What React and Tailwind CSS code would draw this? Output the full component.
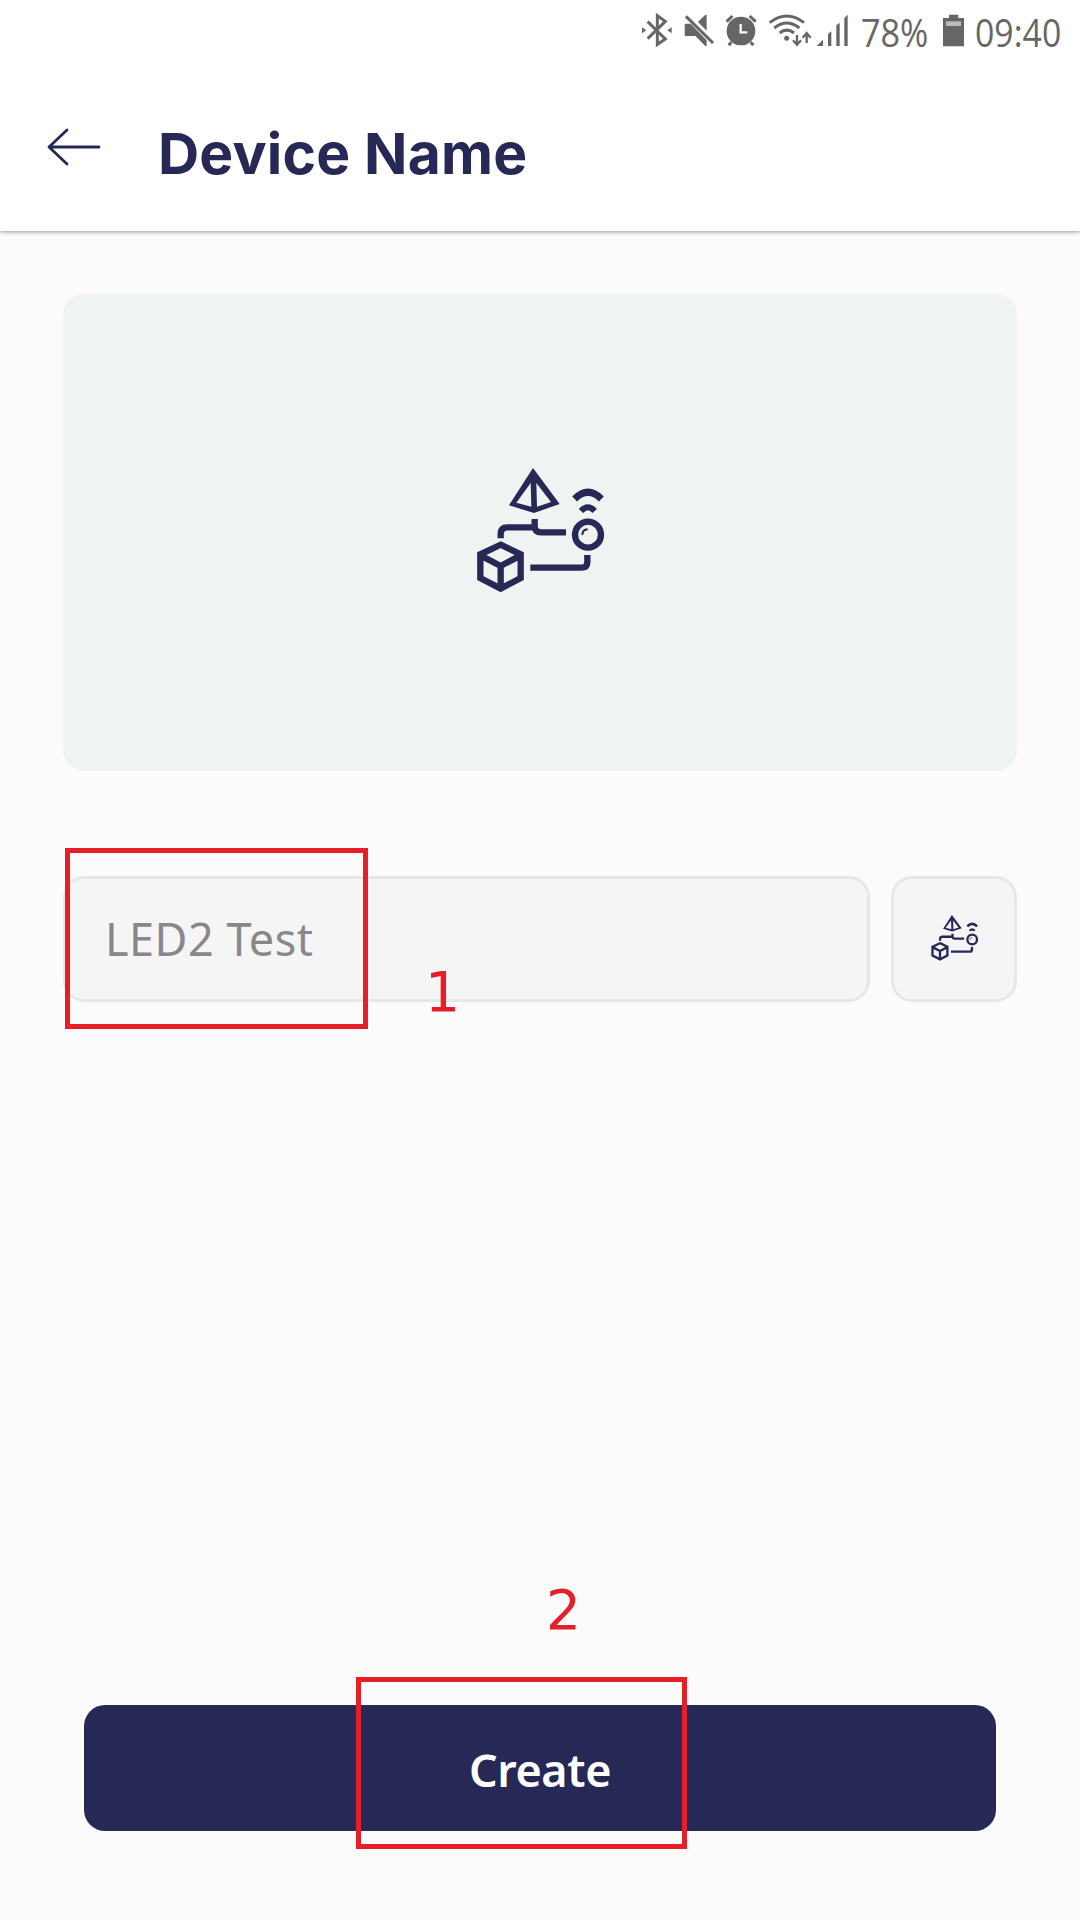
const NAVY = "#262856";

function DeviceIcon({ className }) {
  return (
    <svg viewBox="0 6 480 480" className={className} fill="none" stroke={NAVY} strokeWidth="19">
      <path fillRule="evenodd" fill={NAVY} stroke="none" d="M219 54 L299 162 L222 189 L147 166 Z M212 99 L169 158 L214 170 Z M229 99 L231 170 L273 156 Z" />
      <path d="M224 207 V228 Q224 247 243 247 H318" />
      <path d="M122 265 V252 Q122 232 142 232 H219" />
      <path d="M211 353 H364 Q382 353 382 335 V315" />
      <path d="M122 284 L182 313 V384 L122 416 L61 384 V313 Z M61 316 L122 348 L182 316 M122 348 V416" />
      <circle cx="384" cy="254" r="39" />
      <path strokeWidth="6" d="M367 255 Q367 239 383 238" />
      <path d="M344 147 Q384 107 424 147" strokeWidth="21" />
      <path d="M363 183 Q384 161 404 183" strokeWidth="18" />
    </svg>
  );
}

function BluetoothIcon() {
  return (
    <svg viewBox="30 0 120 180" className="h-[60px] w-[40px]" fill="none" stroke="#666" strokeWidth="9">
      <path d="M53 65 L106 117 L82 133 V47 L106 64 L53 116" />
      <path d="M36 82 L49 91 L36 100 Z M125 82 L112 91 L125 100 Z" fill="#666" stroke="none" />
    </svg>
  );
}

function MuteIcon() {
  return (
    <svg viewBox="150 0 120 180" className="h-[60px] w-[40px]" fill="#666">
      <path d="M164 75 Q164 71 168 71 H182 L230 121 V138 H226 L196 108 H168 Q164 108 164 104 Z M204 66 L226 44 H230 V92 Z" />
      <path d="M168 49 L249 129" stroke="#666" strokeWidth="9" />
    </svg>
  );
}

function AlarmIcon() {
  return (
    <svg viewBox="270 0 135 180" className="h-[60px] w-[45px]" fill="none">
      <circle cx="333" cy="93" r="43" fill="#666" />
      <path d="M290 65 L307 48 M359 48 L377 65" stroke="#666" strokeWidth="9" />
      <path d="M304 127 L296 136 M362 127 L370 136" stroke="#666" strokeWidth="9" />
      <path d="M332 72 V97 H352" stroke="#fff" strokeWidth="7" />
    </svg>
  );
}

function WifiIcon() {
  return (
    <svg viewBox="405 0 150 180" className="h-[60px] w-[50px]" fill="none" stroke="#666" strokeWidth="9">
      <path d="M419 68 Q470 28 522 68 M433 84 Q470 54 508 84 M449 99 Q470 82 492 99" />
      <circle cx="470" cy="115" r="7.500" fill="#666" stroke="none" />
      <path d="M501 105 V134 M489 121 L501 134 L513 121 M530 129 V99 M518 113 L530 99 L542 113" strokeWidth="7" />
    </svg>
  );
}

function SignalIcon() {
  return (
    <svg viewBox="555 0 105 180" className="h-[60px] w-[35px]" fill="#666">
      <path d="M560 138 L579 119 V138 Z M594 138 V102 L604 94 V138 Z M619 138 V76 L629 68 V138 Z M643 138 V54 L653 44 V138 Z" />
    </svg>
  );
}

function BatteryIcon() {
  return (
    <svg viewBox="270 0 90 180" className="h-[60px] w-[30px]">
      <path fill="#666" d="M297 44 H325 V54 H342 V139 H279 V54 H297 Z" />
      <path fill="#bbb" d="M288 64 H333 V78 H288 Z" />
    </svg>
  );
}

export default function App() {
  return (
    <div className="relative flex h-[1920px] w-[1080px] flex-col overflow-hidden bg-[#fbfbfb] font-['Noto_Sans',sans-serif]">
      <header className="h-[231px] shrink-0 bg-white shadow-[0_1px_4px_rgba(0,0,0,0.4)]">
        <div className="flex h-[60px] pl-[640px] font-['Open_Sans',sans-serif] text-[38px] font-medium leading-[64px] text-[#666]">
          <BluetoothIcon />
          <MuteIcon />
          <AlarmIcon />
          <WifiIcon />
          <SignalIcon />
          <span className="w-[90px] shrink-0 pl-[11px]">
            <span className="inline-block origin-left scale-x-[0.9]">78%</span>
          </span>
          <BatteryIcon />
          <span className="pl-[5px]">
            <span className="inline-block origin-left scale-x-[0.89]">09:40</span>
          </span>
        </div>
        <div className="flex pl-[47px]">
          <svg viewBox="0 0 54 38" className="mt-[68px] h-[38px] w-[54px]" fill="none" stroke={NAVY} strokeWidth="2.800" strokeLinecap="round" strokeLinejoin="round">
            <path d="M52 19 H2 M20 2 L2 19 L20 36" />
          </svg>
          <h1 className="ml-[57px] mt-[55px] whitespace-nowrap font-['Inter',sans-serif] text-[57px] font-bold leading-[78px] tracking-[0.2px] text-[#262856]">Device Name</h1>
        </div>
      </header>

      <main className="flex grow flex-col px-[63px] pt-[63px]">
        <div className="flex h-[477px] items-center justify-center rounded-[21px] bg-[#eff3f2]">
          <DeviceIcon className="size-[160px] -translate-y-px" />
        </div>
        <div className="mt-[105px] flex gap-[21px]">
          <div className="flex h-[126px] grow items-center rounded-[21px] border-[3px] border-[#e7e7e7] bg-[#f5f5f5] pl-[39px] text-[45px] tracking-[0.5px] text-[#88888a]">
            <span>LED2 Test</span>
          </div>
          <button className="flex size-[126px] items-center justify-center rounded-[21px] border-[3px] border-[#e7e7e7] bg-[#f5f5f5]">
            <DeviceIcon className="size-[59px] -translate-y-px" />
          </button>
        </div>
        <button className="mx-[21px] mb-[89px] mt-auto h-[126px] rounded-[21px] bg-[#262856] pt-[4px] text-[45px] font-semibold tracking-[-0.4px] text-white">
          <span>Create</span>
        </button>
      </main>

      <div className="absolute left-[65px] top-[848px] h-[181px] w-[303px] border-[5px] border-[#e61e27]" />
      <div className="absolute left-[425px] top-[952px] font-['DejaVu_Sans',sans-serif] text-[55px] leading-[80px] text-[#e61e27]">1</div>
      <div className="absolute left-[546px] top-[1570px] font-['DejaVu_Sans',sans-serif] text-[55px] leading-[80px] text-[#e61e27]">2</div>
      <div className="absolute left-[356px] top-[1677px] h-[172px] w-[331px] border-[5px] border-[#e61e27]" />
    </div>
  );
}
